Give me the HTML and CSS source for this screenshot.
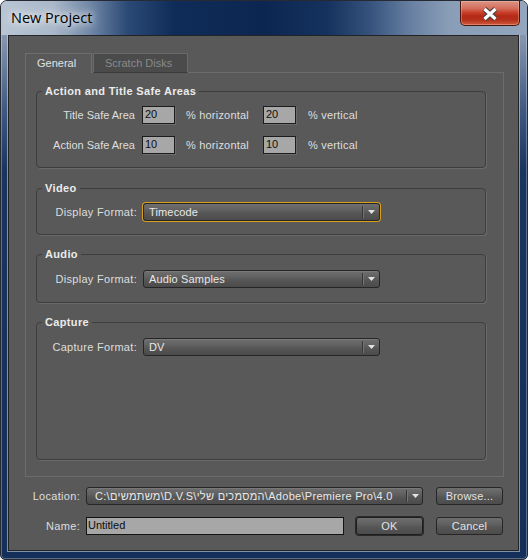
FILE: index.html
```html
<!DOCTYPE html>
<html>
<head>
<meta charset="utf-8">
<title>New Project</title>
<link rel="stylesheet" href="styles.css">
</head>
<body>
<div class="window">
  <div class="titlebar">
    <span class="title">New Project</span>
    <div class="close">
      <svg width="16" height="14" viewBox="0 0 16 14">
        <path d="M2.5 2 L13.5 12 M13.5 2 L2.5 12" stroke="#3c3c3c" stroke-width="5.2" fill="none"/>
        <path d="M2.5 2 L13.5 12 M13.5 2 L2.5 12" stroke="#ffffff" stroke-width="3.2" fill="none"/>
      </svg>
    </div>
  </div>
  <div class="client">
    <div class="tabs">
      <div class="tab active">General</div>
      <div class="tab inactive">Scratch Disks</div>
    </div>
    <div class="panel">
      <fieldset class="group g-safe">
        <legend>Action and Title Safe Areas</legend>
        <div class="safe-row">
          <span class="lbl">Title Safe Area</span>
          <span class="num first">20</span>
          <span class="unit-h">% horizontal</span>
          <span class="num">20</span>
          <span class="unit-v">% vertical</span>
        </div>
        <div class="safe-row">
          <span class="lbl">Action Safe Area</span>
          <span class="num first">10</span>
          <span class="unit-h">% horizontal</span>
          <span class="num">10</span>
          <span class="unit-v">% vertical</span>
        </div>
      </fieldset>
      <fieldset class="group g-video">
        <legend>Video</legend>
        <div class="fmt-row">
          <span class="flbl">Display Format:</span>
          <div class="dd focus">
            <span class="dd-text">Timecode</span>
            <span class="dd-btn"><svg width="7" height="4" viewBox="0 0 7 4"><polygon points="0,0 7,0 3.5,4" fill="#e2e2e2"/></svg></span>
          </div>
        </div>
      </fieldset>
      <fieldset class="group g-audio">
        <legend>Audio</legend>
        <div class="fmt-row">
          <span class="flbl">Display Format:</span>
          <div class="dd">
            <span class="dd-text">Audio Samples</span>
            <span class="dd-btn"><svg width="7" height="4" viewBox="0 0 7 4"><polygon points="0,0 7,0 3.5,4" fill="#e2e2e2"/></svg></span>
          </div>
        </div>
      </fieldset>
      <fieldset class="group g-capture">
        <legend>Capture</legend>
        <div class="fmt-row">
          <span class="flbl">Capture Format:</span>
          <div class="dd">
            <span class="dd-text">DV</span>
            <span class="dd-btn"><svg width="7" height="4" viewBox="0 0 7 4"><polygon points="0,0 7,0 3.5,4" fill="#e2e2e2"/></svg></span>
          </div>
        </div>
      </fieldset>
    </div>
    <div class="bottom-row loc-row">
      <span class="blbl">Location:</span>
      <div class="dd loc">
        <span class="dd-text loc-text">C:\משתמשים\D.V.S\המסמכים שלי\Adobe\Premiere Pro\4.0</span>
        <span class="dd-btn"><svg width="7" height="4" viewBox="0 0 7 4"><polygon points="0,0 7,0 3.5,4" fill="#e2e2e2"/></svg></span>
      </div>
      <div class="btn browse">Browse...</div>
    </div>
    <div class="bottom-row name-row">
      <span class="blbl">Name:</span>
      <div class="name-input">Untitled</div>
      <div class="btn ok">OK</div>
      <div class="btn cancel">Cancel</div>
    </div>
  </div>
</div>
</body>
</html>
```

FILE: styles.css
```css
html, body {
  margin: 0;
  padding: 0;
  background: #ffffff;
}

body {
  font-family: "Liberation Sans", Arial, sans-serif;
  font-size: 11px;
  color: #dedede;
}

.window {
  width: 528px;
  height: 560px;
  box-sizing: border-box;
  border: 1px solid #262b33;
  border-radius: 7px 7px 5px 5px;
  overflow: hidden;
  position: relative;
  display: flex;
  flex-direction: column;
  background: linear-gradient(to bottom, #9aa8bb 0px, #8193ad 40px, #3e5882 110px, #18355f 170px, #132f5a 100%);
  box-shadow: inset 0 0 0 1px rgba(255, 255, 255, 0.3);
}

.titlebar {
  height: 34px;
  flex: none;
  position: relative;
  padding-top: 7px;
  box-sizing: border-box;
  background: linear-gradient(to right, #b9c5d4 0%, #a9b7c9 10%, #6f86a6 17%, #2c4a76 24%, #0f2c58 33%, #0b2651 50%, #15325e 62%, #35527c 70%, #6880a2 78%, #899db7 85%, #93a6be 100%);
}

.title {
  display: inline-block;
  margin-left: 10px;
  font-family: "Open Sans", "Noto Sans", sans-serif;
  font-size: 14.5px;
  line-height: 20px;
  color: #000000;
  text-shadow: 0 0 6px rgba(255, 255, 255, 0.95), 0 0 12px rgba(255, 255, 255, 0.85), 0 0 18px rgba(235, 241, 248, 0.8);
}

.close {
  position: absolute;
  top: 0;
  right: 7px;
  width: 60px;
  height: 25px;
  box-sizing: border-box;
  border: 1px solid #4a1710;
  border-top: none;
  border-radius: 0 0 5px 5px;
  background: linear-gradient(to bottom, #dc9484 0%, #d4705e 30%, #c8402b 48%, #b52a17 62%, #b4301b 78%, #cf5a3c 100%);
  box-shadow: inset 0 0 0 1px rgba(255, 210, 195, 0.35);
  display: flex;
  align-items: center;
  justify-content: center;
}

.close svg {
  display: block;
  margin-top: 1px;
}

.client {
  margin: 0 8px 0 7px;
  height: 516px;
  box-sizing: border-box;
  border: 1px solid #232323;
  background: #595959;
  padding: 17px 14px 15px 16px;
  box-shadow: 0 0 0 1px rgba(215, 224, 236, 0.55);
  display: flex;
  flex-direction: column;
}

.tabs {
  display: flex;
  height: 20px;
  margin-bottom: -1px;
  position: relative;
  z-index: 1;
}

.tab {
  box-sizing: border-box;
  height: 20px;
  border: 1px solid #6e6e6e;
  border-bottom: none;
  padding-left: 11px;
  line-height: 19px;
}

.tab.active {
  width: 67px;
  background: #595959;
  color: #e2e2e2;
}

.tab.inactive {
  width: 95px;
  margin-left: 1px;
  background: #4b4b4b;
  color: #8a8a8a;
  border-color: #6a6a6a;
  border-bottom: 1px solid #3b3b3b;
}

.panel {
  height: 405px;
  box-sizing: border-box;
  border: 1px solid #6c6c6c;
  padding: 12px 17px 16px 10px;
  display: flex;
  flex-direction: column;
}

.group {
  margin: 0;
  padding: 8px 0 13px 0;
  min-width: 0;
  border: 1px solid #3e3e3e;
  border-radius: 4px;
  box-shadow: 1px 1px 0 #6a6a6a;
}

.group legend {
  padding: 0 3px;
  margin-left: 5px;
  line-height: 13px;
  font-weight: bold;
  letter-spacing: 0.35px;
  color: #ebebeb;
}

.g-video {
  margin-top: 14px;
}

.g-audio {
  margin-top: 13px;
  padding-top: 9px;
  padding-bottom: 14px;
}

.g-capture {
  margin-top: 13px;
  padding-top: 9px;
  flex: 1;
}

.safe-row {
  display: flex;
  align-items: center;
  height: 18px;
}

.safe-row + .safe-row {
  margin-top: 12px;
}

.lbl {
  width: 98px;
  text-align: right;
  white-space: nowrap;
}

.num {
  width: 33px;
  height: 18px;
  box-sizing: border-box;
  border: 1px solid #1c1c1c;
  background: #a7a7a7;
  color: #0e0e0e;
  padding-left: 2px;
  line-height: 14px;
  box-shadow: 1px 1px 0 #6b6b6b;
}

.num.first {
  margin-left: 7px;
}

.unit-h {
  width: 77px;
  margin-left: 11px;
  white-space: nowrap;
  letter-spacing: 0.2px;
}

.unit-v {
  margin-left: 12px;
  white-space: nowrap;
  letter-spacing: 0.2px;
}

.fmt-row {
  display: flex;
  align-items: center;
  height: 18px;
}

.flbl {
  width: 100px;
  margin-right: 6px;
  text-align: right;
  white-space: nowrap;
  letter-spacing: 0.3px;
}

.dd {
  width: 237px;
  height: 18px;
  box-sizing: border-box;
  display: flex;
  border: 1px solid #262626;
  border-radius: 3px;
  background: linear-gradient(to bottom, #6f6f6f 0%, #626262 35%, #555555 60%, #4b4b4b 100%);
  box-shadow: inset 0 1px 0 rgba(255, 255, 255, 0.08);
}

.dd.focus {
  box-shadow: 0 0 0 1px #d9a11c;
}

.dd-text {
  flex: 1;
  min-width: 0;
  padding-left: 5px;
  line-height: 16px;
  color: #e8e8e8;
  white-space: nowrap;
  overflow: hidden;
  letter-spacing: 0.15px;
}

.dd-btn {
  width: 17px;
  flex: none;
  box-sizing: border-box;
  border-left: 1px solid #363636;
  box-shadow: inset 1px 0 0 #747474;
  display: flex;
  align-items: center;
  justify-content: center;
  margin: 2px 0;
}

.dd-btn svg {
  display: block;
  margin-left: 1px;
}

.bottom-row {
  display: flex;
  align-items: center;
  height: 18px;
}

.loc-row {
  margin-top: 10px;
}

.name-row {
  margin-top: 12px;
}

.blbl {
  width: 55px;
  margin-right: 6px;
  text-align: right;
  white-space: nowrap;
  letter-spacing: 0.3px;
}

.dd.loc {
  width: 337px;
}

.dd.loc .dd-btn {
  width: 16px;
}

.loc-text {
  padding-left: 8px;
  letter-spacing: 0.3px;
}

.btn {
  width: 67px;
  height: 18px;
  box-sizing: border-box;
  border: 1px solid #262626;
  border-radius: 3px;
  background: linear-gradient(to bottom, #6f6f6f 0%, #626262 35%, #555555 60%, #4b4b4b 100%);
  color: #e2e2e2;
  text-align: center;
  line-height: 16px;
  letter-spacing: 0.2px;
}

.browse {
  margin-left: 13px;
}

.name-input {
  width: 258px;
  height: 18px;
  box-sizing: border-box;
  border: 1px solid #141414;
  background: #a7a7a7;
  color: #0e0e0e;
  padding-left: 1px;
  line-height: 15px;
}

.ok {
  margin-left: 12px;
  border-color: #1e1e1e;
  box-shadow: 0 0 0 1px #2a2a2a;
}

.cancel {
  margin-left: 13px;
}
```
